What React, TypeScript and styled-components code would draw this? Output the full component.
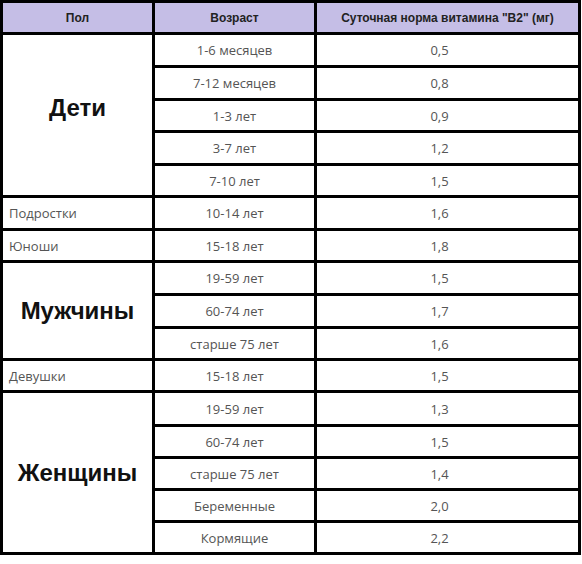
import React from "react";
import styled, { createGlobalStyle } from "styled-components";

const Global = createGlobalStyle`
  html, body { margin: 0; padding: 0; background: #fff; }
  body { font-family: "Open Sans", "Liberation Sans", sans-serif; }
`;

const Grid = styled.div`
  display: grid;
  grid-template-columns: 149px 159px 261px;
  grid-template-rows: 29px 30px 30px 29px 30px 29px 30px 29px 30px 30px 29px 29px 31px 29px 29px 29px 29px;
  gap: 3px;
  padding: 3px;
  background: #000;
  width: max-content;
`;

const HeadCell = styled.div`
  background: #c5bee6;
  display: flex;
  align-items: center;
  justify-content: center;
  font-family: "Liberation Sans", Arial, sans-serif;
  font-weight: bold;
  font-size: 12px;
  color: #222;
`;

const GroupCell = styled.div<{ $span: number; $shift?: number }>`
  background: #fff;
  grid-row: span ${(p) => p.$span};
  display: flex;
  align-items: center;
  justify-content: center;
  font-family: "Liberation Sans", Arial, sans-serif;
  font-weight: bold;
  font-size: 24px;
  color: #111;
  padding-bottom: ${(p) => p.$shift ?? 0}px;
`;

const LabelCell = styled.div`
  background: #fff;
  display: flex;
  align-items: center;
  padding-left: 6px;
  font-size: 13px;
  color: #555;
`;

const AgeCell = styled.div`
  background: #fff;
  display: flex;
  align-items: center;
  justify-content: center;
  font-size: 13px;
  color: #555;
`;

const ValueCell = styled.div`
  background: #fff;
  display: flex;
  align-items: center;
  justify-content: center;
  padding-right: 16px;
  font-size: 13px;
  color: #555;
`;

type Row = { age: string; value: string };
type Group =
  | { kind: "big"; name: string; shift?: number; rows: Row[] }
  | { kind: "small"; name: string; rows: Row[] };

const groups: Group[] = [
  {
    kind: "big",
    name: "Дети",
    shift: 14,
    rows: [
      { age: "1-6 месяцев", value: "0,5" },
      { age: "7-12 месяцев", value: "0,8" },
      { age: "1-3 лет", value: "0,9" },
      { age: "3-7 лет", value: "1,2" },
      { age: "7-10 лет", value: "1,5" },
    ],
  },
  { kind: "small", name: "Подростки", rows: [{ age: "10-14 лет", value: "1,6" }] },
  { kind: "small", name: "Юноши", rows: [{ age: "15-18 лет", value: "1,8" }] },
  {
    kind: "big",
    name: "Мужчины",
    rows: [
      { age: "19-59 лет", value: "1,5" },
      { age: "60-74 лет", value: "1,7" },
      { age: "старше 75 лет", value: "1,6" },
    ],
  },
  { kind: "small", name: "Девушки", rows: [{ age: "15-18 лет", value: "1,5" }] },
  {
    kind: "big",
    name: "Женщины",
    rows: [
      { age: "19-59 лет", value: "1,3" },
      { age: "60-74 лет", value: "1,5" },
      { age: "старше 75 лет", value: "1,4" },
      { age: "Беременные", value: "2,0" },
      { age: "Кормящие", value: "2,2" },
    ],
  },
];

export default function App() {
  return (
    <>
      <Global />
      <Grid>
        <HeadCell>Пол</HeadCell>
        <HeadCell>Возраст</HeadCell>
        <HeadCell>Суточная норма витамина "B2" (мг)</HeadCell>
        {groups.map((g) =>
          g.rows.map((r, i) => (
            <React.Fragment key={g.name + i}>
              {i === 0 &&
                (g.kind === "big" ? (
                  <GroupCell $span={g.rows.length} $shift={g.shift}>
                    {g.name}
                  </GroupCell>
                ) : (
                  <LabelCell>{g.name}</LabelCell>
                ))}
              <AgeCell>{r.age}</AgeCell>
              <ValueCell>{r.value}</ValueCell>
            </React.Fragment>
          ))
        )}
      </Grid>
    </>
  );
}
